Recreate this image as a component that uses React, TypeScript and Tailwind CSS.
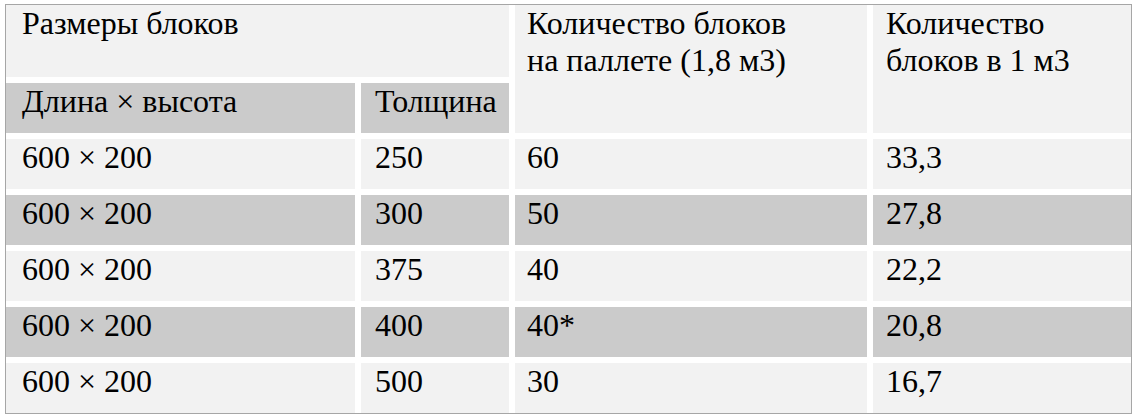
import React from "react";

const rows = [
  ["600 × 200", "250", "60", "33,3"],
  ["600 × 200", "300", "50", "27,8"],
  ["600 × 200", "375", "40", "22,2"],
  ["600 × 200", "400", "40*", "20,8"],
  ["600 × 200", "500", "30", "16,7"],
];

export default function App() {
  return (
    <div className="w-[1137px] h-[419px] bg-white pt-[4px] pl-[5px] font-['Liberation_Serif'] text-[32px] leading-[37px] text-black">
      <div className="w-[1127px] border border-[#a6a6a6]">
        <div className="grid grid-cols-[349px_148px_352px_258px] grid-rows-[72px_50px_50px_50px_50px_50px_50px] gap-[6px]">
          <div className="col-span-2 bg-[#f2f2f2] pl-[16px]">Размеры блоков</div>
          <div className="row-span-2 bg-[#f2f2f2] pl-[12px]">
            Количество блоков
            <br />
            на паллете (1,8 м3)
          </div>
          <div className="row-span-2 bg-[#f2f2f2] pl-[13px]">
            Количество
            <br />
            блоков в 1 м3
          </div>
          <div className="bg-[#cbcbcb] pl-[16px]">Длина × высота</div>
          <div className="bg-[#cbcbcb] pl-[14px]">Толщина</div>
          {rows.map((r, i) => {
            const bg = i % 2 === 1 ? "bg-[#cbcbcb]" : "bg-[#f2f2f2]";
            return (
              <React.Fragment key={i}>
                <div className={`${bg} pl-[16px]`}>{r[0]}</div>
                <div className={`${bg} pl-[14px]`}>{r[1]}</div>
                <div className={`${bg} pl-[12px]`}>{r[2]}</div>
                <div className={`${bg} pl-[13px]`}>{r[3]}</div>
              </React.Fragment>
            );
          })}
        </div>
      </div>
    </div>
  );
}
